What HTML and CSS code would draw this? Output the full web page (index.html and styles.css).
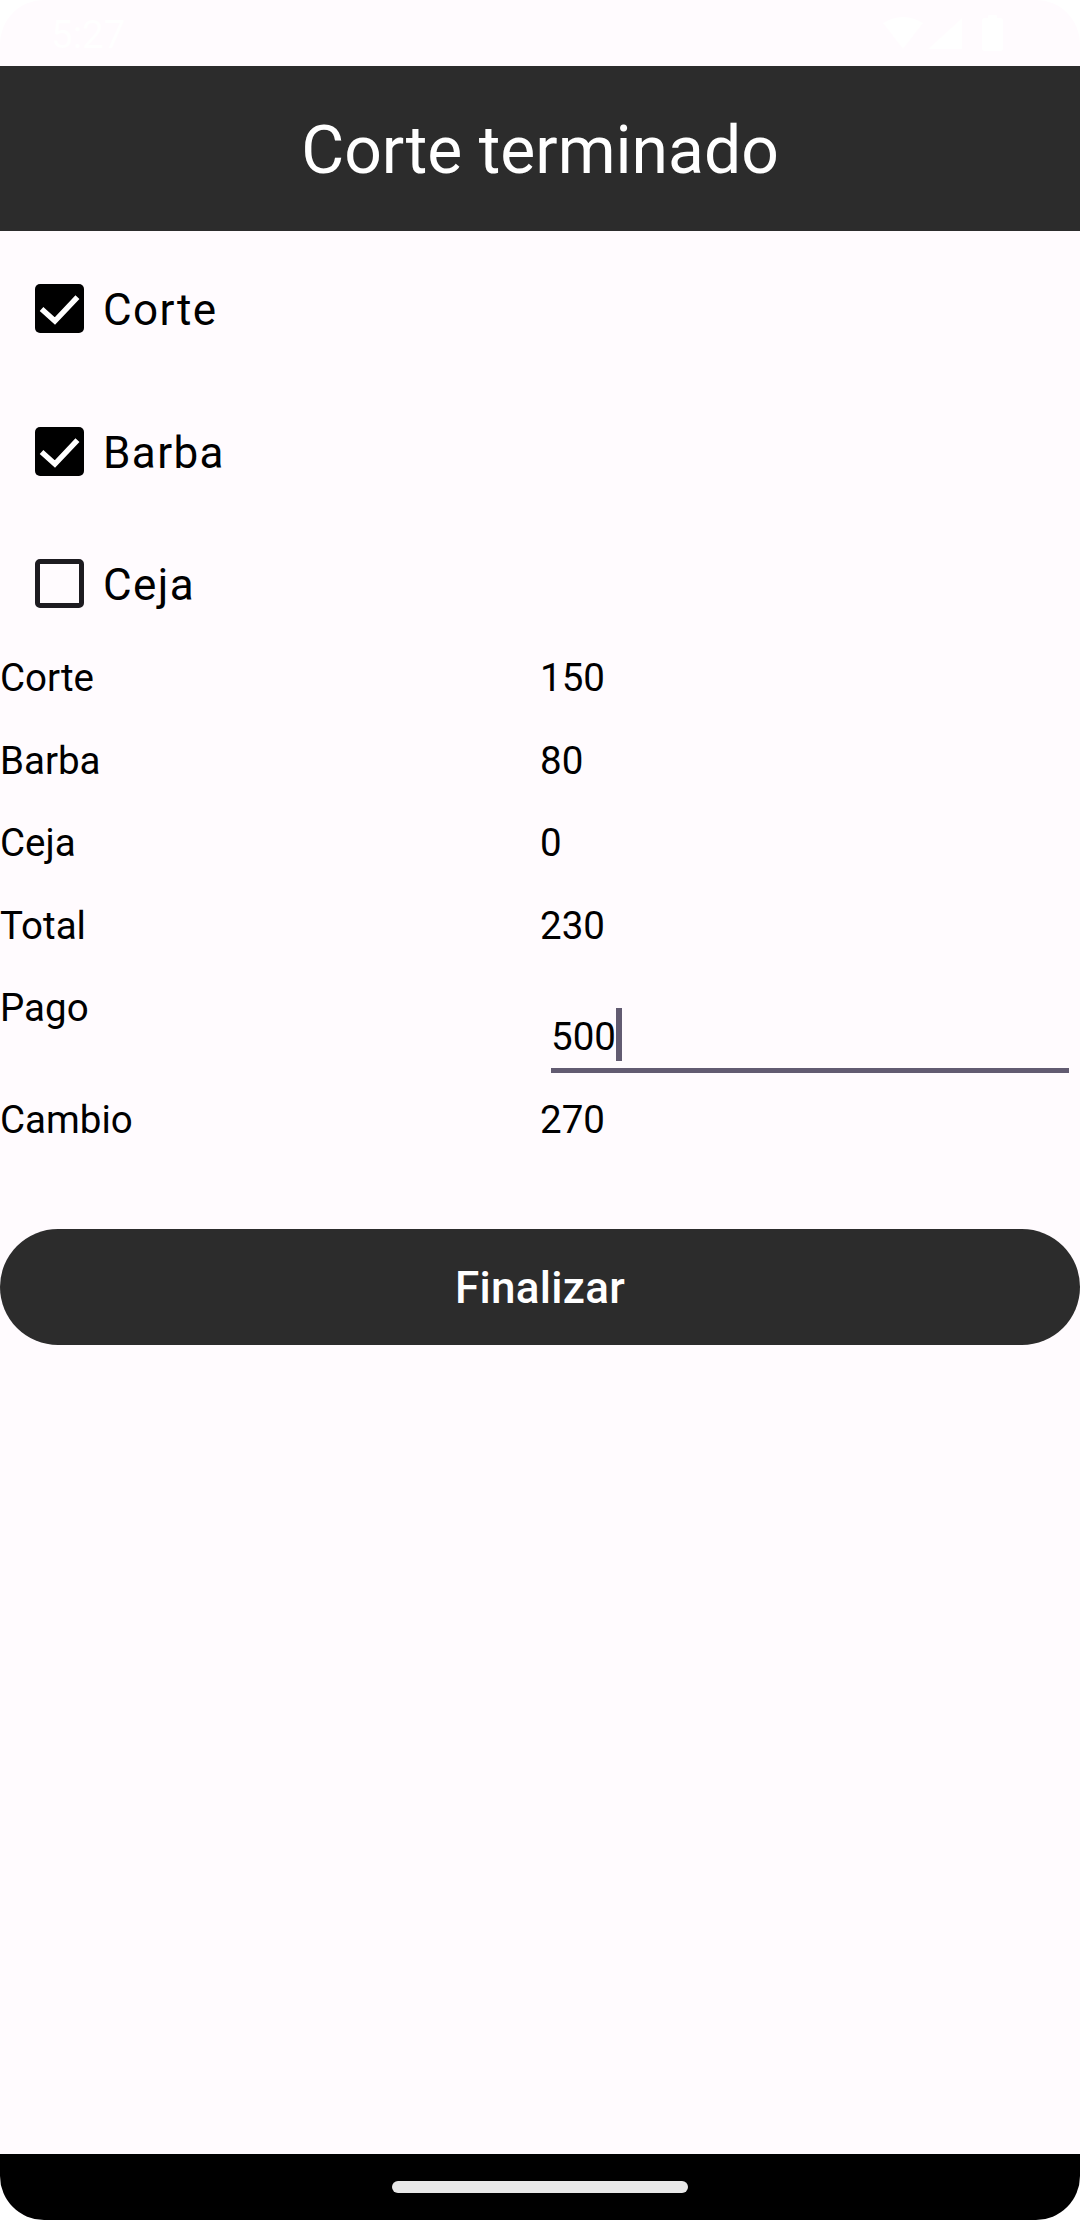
FILE: index.html
```html
<!DOCTYPE html>
<html lang="es">
<head>
<meta charset="utf-8">
<title>Corte terminado</title>
<link rel="stylesheet" href="styles.css">
</head>
<body>
<div class="screen">
  <div class="statusbar">
    <span class="clock">5:27</span>
    <div class="sysicons">
      <svg class="wifi" width="40" height="32" viewBox="0 0 40 32"><path d="M0 6 Q20 -6 40 6 L20 32 Z" fill="#ffffff"/></svg>
      <svg class="signal" width="34" height="32" viewBox="0 0 34 32"><path d="M0 32 L34 32 L34 1 Z" fill="#ffffff"/></svg>
      <svg class="battery" width="21" height="36" viewBox="0 0 21 36"><rect x="6" y="0" width="9" height="4" rx="1" fill="#ffffff"/><rect x="0" y="3" width="21" height="33" rx="3" fill="#ffffff"/></svg>
    </div>
  </div>

  <header class="appbar">
    <h1 class="title">Corte terminado</h1>
  </header>

  <main class="content">
    <div class="checks">
      <div class="check first">
        <span class="box checked">
          <svg width="49" height="49" viewBox="0 0 18 18"><path d="M2.4 9.2 L7.3 13.6 L15.6 4.8" fill="none" stroke="#ffffff" stroke-width="2"/></svg>
        </span>
        <span class="check-label">Corte</span>
      </div>
      <div class="check second">
        <span class="box checked">
          <svg width="49" height="49" viewBox="0 0 18 18"><path d="M2.4 9.2 L7.3 13.6 L15.6 4.8" fill="none" stroke="#ffffff" stroke-width="2"/></svg>
        </span>
        <span class="check-label">Barba</span>
      </div>
      <div class="check">
        <span class="box unchecked"></span>
        <span class="check-label">Ceja</span>
      </div>
    </div>

    <div class="summary">
      <div class="row"><span class="cell">Corte</span><span class="cell">150</span></div>
      <div class="row"><span class="cell">Barba</span><span class="cell">80</span></div>
      <div class="row"><span class="cell">Ceja</span><span class="cell">0</span></div>
      <div class="row"><span class="cell">Total</span><span class="cell">230</span></div>
      <div class="row pay">
        <span class="cell">Pago</span>
        <div class="field">
          <span class="field-text">500</span><span class="caret"></span>
        </div>
      </div>
      <div class="row last"><span class="cell">Cambio</span><span class="cell">270</span></div>
    </div>

    <button class="finish" type="button">Finalizar</button>
  </main>

  <div class="navbar"><span class="pill"></span></div>
</div>
</body>
</html>
```

FILE: styles.css
```css
* {
  box-sizing: border-box;
}

html, body {
  margin: 0;
  padding: 0;
  background: #ffffff;
}

body {
  font-family: Roboto, "Noto Sans", "Liberation Sans", sans-serif;
  color: #000000;
}

.screen {
  width: 1080px;
  height: 2220px;
  background: #fffbfe;
  border-radius: 44px;
  overflow: hidden;
  display: flex;
  flex-direction: column;
}

/* status bar */
.statusbar {
  height: 66px;
  flex: 0 0 66px;
  display: flex;
  align-items: center;
  justify-content: space-between;
  padding: 0 77px 0 51px;
}

.clock {
  color: #ffffff;
  font-size: 38.5px;
  line-height: 45px;
  margin-top: 2px;
}

.sysicons {
  display: flex;
  align-items: center;
}

.wifi {
  margin-right: 5px;
}

.signal {
  margin-right: 20px;
}

/* app bar */
.appbar {
  height: 165px;
  flex: 0 0 165px;
  background: #2c2c2c;
  display: flex;
  align-items: center;
  justify-content: center;
}

.title {
  margin: 0;
  color: #ffffff;
  font-size: 66px;
  font-weight: 400;
  line-height: 78px;
  padding-top: 4px;
}

/* content */
.content {
  flex: 1 1 auto;
  display: flex;
  flex-direction: column;
}

.checks {
  margin-top: 11px;
  display: flex;
  flex-direction: column;
}

.check {
  height: 132px;
  display: flex;
  align-items: center;
  padding-left: 35px;
}

.check.second {
  margin-top: 11px;
}

.box {
  width: 49px;
  height: 49px;
  border-radius: 5px;
  flex: 0 0 49px;
  display: flex;
}

.box.checked {
  background: #000000;
}

.box.unchecked {
  border: 5.5px solid #1d1b20;
}

.check-label {
  margin-left: 19px;
  font-size: 44px;
  letter-spacing: 1.4px;
  line-height: 52px;
  color: #000000;
  padding-top: 4px;
}

/* summary table */
.summary {
  margin-top: 6px;
  display: flex;
  flex-direction: column;
}

.row {
  display: grid;
  grid-template-columns: 540px 540px;
  height: 82.6px;
  align-items: start;
}

.row.pay {
  height: 111.6px;
}

.row.last {
  height: 45px;
}

.cell {
  font-size: 38.5px;
  line-height: 45px;
  color: #000000;
}

.field {
  margin: 0 11px;
  padding-top: 28.6px;
  padding-bottom: 7.3px;
  border-bottom: 5px solid #625b71;
  display: flex;
  align-items: flex-start;
}

.field-text {
  font-size: 38.5px;
  line-height: 45px;
  color: #000000;
}

.caret {
  width: 6px;
  height: 53px;
  margin-top: -6px;
  background: #625b71;
}

/* button */
.finish {
  margin: 87px 0 0 0;
  width: 1080px;
  height: 116px;
  border: none;
  border-radius: 58px;
  background: #2c2c2c;
  color: #ffffff;
  font-family: Roboto, "Noto Sans", "Liberation Sans", sans-serif;
  font-size: 44px;
  font-weight: 500;
  letter-spacing: 0.3px;
  padding: 3px 0 0 0;
}

/* navigation bar */
.navbar {
  height: 66px;
  flex: 0 0 66px;
  background: #000000;
  display: flex;
  align-items: center;
  justify-content: center;
}

.pill {
  width: 296px;
  height: 12px;
  border-radius: 6px;
  background: #e8e8e8;
}
```
